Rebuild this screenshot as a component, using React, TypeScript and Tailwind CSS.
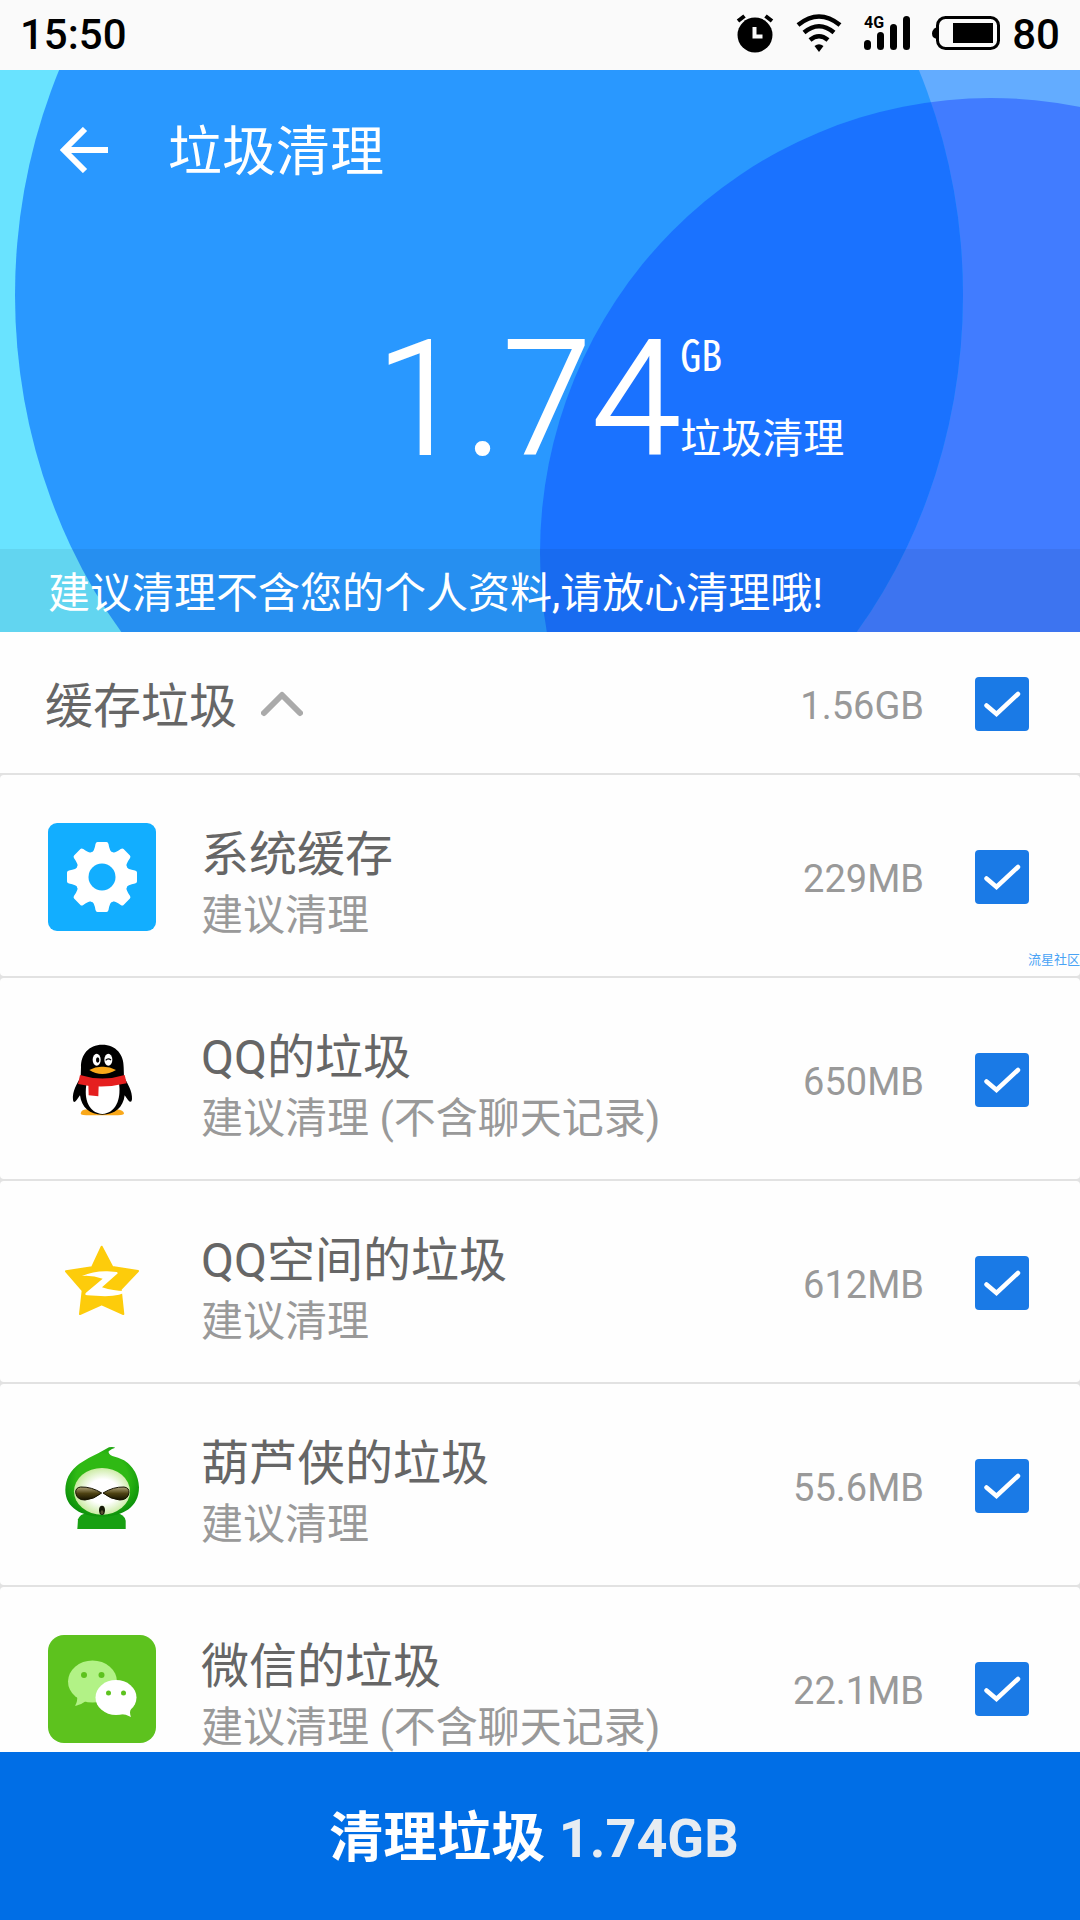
import React, { useState } from "react";

type JunkItem = {
  id: string;
  title: string;
  hint: string;
  size: string;
  icon: React.ReactNode;
};

const SystemIcon = () => (
  <svg viewBox="0 0 108 108" className="size-[108px]" aria-hidden="true">
    <rect width="108" height="108" rx="9" fill="#12aeff" />
    <g fill="#fff">
      <circle cx="54" cy="54" r="27" />
      {[0, 45, 90, 135, 180, 225, 270, 315].map((angle) => (
        <path
          key={angle}
          d="M43 31 Q46.500 28 47.500 21 Q48 19 49.500 19 L58.500 19 Q60 19 60.500 21 Q61.500 28 65 31 Z"
          transform={`rotate(${angle} 54 54)`}
        />
      ))}
    </g>
    <circle cx="54" cy="54" r="13.500" fill="#12aeff" />
  </svg>
);

const QQIcon = () => (
  <svg viewBox="-6 18 324 324" className="size-[108px]" aria-hidden="true">
    <path d="M92 281 Q92 268 116 268 L198 268 Q222 270 222 281 Q220 286 190 286 L122 286 Q92 286 92 281Z" fill="#f9a81a" />
    <path
      d="M157 74 C116 74 92 104 93 142 L92 172 C82 190 66 214 69 240 Q71 252 80 240 L90 226 C94 262 120 284 157 284 C194 284 220 262 224 226 L234 240 Q244 252 246 238 C248 214 232 190 222 172 L221 142 C222 104 198 74 157 74Z"
      fill="#000"
    />
    <path d="M110 190 C100 240 118 280 157 282 C196 280 214 240 207 190Z" fill="#fff" />
    <path d="M90 165 Q157 186 224 165 L230 190 Q157 208 84 192Z" fill="#e51f1f" />
    <path d="M115 190 L146 196 L145 229 L116 226Z" fill="#e51f1f" />
    <ellipse cx="140" cy="119" rx="12" ry="18" fill="#fff" />
    <ellipse cx="175" cy="119" rx="12" ry="18" fill="#fff" />
    <ellipse cx="143" cy="120" rx="5" ry="8" fill="#000" />
    <path d="M167 121 Q174 113 183 120" fill="none" stroke="#000" strokeWidth="4" />
    <path d="M118 150 Q138 139 157 140 Q178 139 198 150 Q178 162 157 162 Q136 162 118 150Z" fill="#f9a81a" />
  </svg>
);

const QzoneIcon = () => (
  <svg viewBox="-6 12 324 324" className="size-[108px]" aria-hidden="true">
    <path
      d="M155 65 L187 126 L264 138 L212 193 L220 267 L155 238 L90 267 L98 197 L48 139 L126 127Z"
      fill="#fdcc0b"
      stroke="#fdcc0b"
      strokeWidth="6"
      strokeLinejoin="round"
    />
    <path
      d="M96 153 Q130 138 172 139 L200 141 Q206 144 200 148 L156 187 Q198 200 231 198 Q216 213 165 214 L112 211 Q102 209 108 203 L158 161 Q126 150 96 153Z"
      fill="#fff"
    />
  </svg>
);

const GourdIcon = () => (
  <svg viewBox="-6 6 324 324" className="size-[108px]" aria-hidden="true">
    <defs>
      <radialGradient id="gourd-hood" cx="50%" cy="45%" r="58%">
        <stop offset="0.600" stopColor="#2fb914" />
        <stop offset="1" stopColor="#0a8f0a" />
      </radialGradient>
      <radialGradient id="gourd-face" cx="52%" cy="50%" r="52%">
        <stop offset="0.500" stopColor="#ffffff" />
        <stop offset="1" stopColor="#c8ea9e" />
      </radialGradient>
      <linearGradient id="gourd-glass" x1="0" y1="0" x2="0" y2="1">
        <stop offset="0" stopColor="#b0a47a" />
        <stop offset="0.500" stopColor="#4d4212" />
        <stop offset="1" stopColor="#161300" />
      </linearGradient>
    </defs>
    <path d="M82 297 L84 268 Q90 252 110 250 L200 250 Q222 252 227 272 L227 297Z" fill="#18a012" />
    <path
      d="M196 53 Q188 49 177 52 L146 69 Q115 83 88 101 Q46 132 46 180 C46 234 96 260 156 260 C218 260 267 232 267 172 Q264 118 222 91 Q204 82 187 78 Q174 72 176 64 Q186 55 196 53Z"
      fill="url(#gourd-hood)"
    />
    <ellipse cx="156" cy="184" rx="84" ry="70" fill="url(#gourd-face)" />
    <g fill="url(#gourd-glass)" stroke="#151200" strokeWidth="3">
      <path d="M155 189 Q125 170 92 171 Q76 173 77 188 Q80 210 105 210 Q132 208 155 189Z" />
      <path d="M159 189 Q190 170 222 171 Q238 173 237 188 Q234 210 209 210 Q182 208 159 189Z" />
    </g>
    <ellipse cx="156" cy="241" rx="9" ry="14" fill="#171a08" />
    <ellipse cx="156" cy="247" rx="4" ry="6" fill="#5a5030" />
  </svg>
);

const WechatIcon = () => (
  <svg viewBox="0 0 108 108" className="size-[108px]" aria-hidden="true">
    <rect width="108" height="108" rx="16" fill="#5dc21e" />
    <path d="M29 60 Q30 66 27 71 Q33 70 38 66Z" fill="#b2f286" />
    <ellipse cx="44.500" cy="46.500" rx="24.500" ry="21" fill="#b2f286" />
    <circle cx="36" cy="40" r="3" fill="#5dc21e" />
    <circle cx="53.500" cy="40" r="3" fill="#5dc21e" />
    <path d="M72 79 Q78 79 83 82 Q81 77 83 74Z" fill="#fff" />
    <ellipse cx="68" cy="62.500" rx="20.500" ry="17.500" fill="#fff" />
    <circle cx="60.500" cy="58" r="2.500" fill="#5dc21e" />
    <circle cx="75.500" cy="58" r="2.500" fill="#5dc21e" />
  </svg>
);

const items: JunkItem[] = [
  { id: "system", title: "系统缓存", hint: "建议清理", size: "229MB", icon: <SystemIcon /> },
  { id: "qq", title: "QQ的垃圾", hint: "建议清理 (不含聊天记录)", size: "650MB", icon: <QQIcon /> },
  { id: "qzone", title: "QQ空间的垃圾", hint: "建议清理", size: "612MB", icon: <QzoneIcon /> },
  { id: "huluxia", title: "葫芦侠的垃圾", hint: "建议清理", size: "55.6MB", icon: <GourdIcon /> },
  { id: "wechat", title: "微信的垃圾", hint: "建议清理 (不含聊天记录)", size: "22.1MB", icon: <WechatIcon /> },
];

const StatusBar = () => (
  <div className="flex h-[70px] shrink-0 items-center justify-between bg-[#fafafa] px-5 text-[42px] font-medium leading-none text-black">
    <span>15:50</span>
    <div className="flex items-center gap-[21px]">
      <svg viewBox="1 2 38 40" className="h-[40px] w-[38px] overflow-visible" aria-hidden="true">
        <circle cx="19" cy="22" r="17.500" fill="#000" />
        <path d="M2 8 L8.500 3 M36 8 L29.500 3" stroke="#000" strokeWidth="4" />
        <path d="M18.500 14 V23.500 H26.500" fill="none" stroke="#fafafa" strokeWidth="4" />
      </svg>
      <svg viewBox="0 2 46 40" className="h-[40px] w-[46px] overflow-visible" aria-hidden="true">
        <g fill="none" stroke="#000" strokeWidth="4.500">
          <path d="M2 12 Q23 -5 44 12" />
          <path d="M8 19.500 Q23 7 38 19.500" />
          <path d="M14 27 Q23 19.500 32 27" />
        </g>
        <path d="M18.500 33 Q23 29.500 27.500 33 L23 39Z" fill="#000" />
      </svg>
      <svg viewBox="0 2 48 40" className="h-[40px] w-[48px] overflow-visible" aria-hidden="true">
        <text x="1" y="15" fontSize="16" fontWeight="700" fill="#000">
          4G
        </text>
        <g stroke="#000" strokeWidth="7" strokeLinecap="round">
          <path d="M4.500 30.500 V33.500" />
          <path d="M17.500 22.500 V33.500" />
          <path d="M30.500 14.500 V33.500" />
          <path d="M43.500 6.500 V33.500" />
        </g>
      </svg>
      <div className="flex items-center gap-3">
        <svg viewBox="0 2 68 40" className="h-[40px] w-[68px]" aria-hidden="true">
          <rect x="5.500" y="4.500" width="61" height="31" rx="8" fill="none" stroke="#000" strokeWidth="3" />
          <path d="M5 14 Q0 16 0 20.500 Q0 25 5 26Z" fill="#000" />
          <rect x="21" y="10" width="40" height="20" fill="#000" />
        </svg>
        <span>80</span>
      </div>
    </div>
  </div>
);

const HeroBackground = () => (
  <svg
    viewBox="0 70 1080 562"
    preserveAspectRatio="none"
    className="absolute inset-0 h-full w-full"
    aria-hidden="true"
  >
    <defs>
      <clipPath id="main-bubble">
        <ellipse cx="489" cy="295" rx="474" ry="534" />
      </clipPath>
    </defs>
    <rect x="0" y="70" width="540" height="562" fill="#69e3ff" />
    <rect x="540" y="70" width="540" height="562" fill="#63acff" />
    <ellipse cx="991" cy="553" rx="451" ry="455" fill="#417cff" />
    <rect x="600" y="553" width="480" height="79" fill="#417cff" />
    <ellipse cx="489" cy="295" rx="474" ry="534" fill="#2998ff" />
    <ellipse cx="991" cy="553" rx="451" ry="455" fill="#1a72ff" clipPath="url(#main-bubble)" />
  </svg>
);

type CheckProps = {
  id: string;
  label: string;
  checked: boolean;
  onChange: () => void;
};

const Check: React.FC<CheckProps> = ({ id, label, checked, onChange }) => (
  <div className="grid size-[54px] shrink-0">
    <input
      id={id}
      type="checkbox"
      aria-label={label}
      checked={checked}
      onChange={onChange}
      className="col-start-1 row-start-1 size-[54px] appearance-none rounded-[4px] border-4 border-[#999999] checked:border-0 checked:bg-[#1a7ae6]"
    />
    {checked && (
      <svg
        viewBox="0 0 54 54"
        className="pointer-events-none col-start-1 row-start-1 size-[54px]"
        aria-hidden="true"
      >
        <path
          d="M11.500 28.500 L21.500 37 L43 17"
          fill="none"
          stroke="#fff"
          strokeWidth="4.500"
          strokeLinecap="round"
        />
      </svg>
    )}
  </div>
);

const App: React.FC = () => {
  const [open, setOpen] = useState(true);
  const [selected, setSelected] = useState<string[]>(items.map((item) => item.id));

  const allSelected = selected.length === items.length;

  const toggle = (id: string) => {
    setSelected((prev) =>
      prev.includes(id) ? prev.filter((value) => value !== id) : [...prev, id]
    );
  };

  return (
    <div className="flex h-screen flex-col overflow-hidden bg-[#fefefe] font-[Roboto,'Noto_Sans_CJK_SC',sans-serif]">
      <StatusBar />

      {/* Header with the total */}
      <header className="relative shrink-0 text-white">
        <HeroBackground />
        <div className="relative">
          <div className="flex h-[160px] items-center gap-[60px] px-[60px]">
            <button type="button" aria-label="返回">
              <svg viewBox="0 0 48 46" className="h-[46px] w-[48px]" aria-hidden="true">
                <path d="M25 2 L4 23 L25 44 M4 23 H48" fill="none" stroke="#fff" strokeWidth="6" />
              </svg>
            </button>
            <h1 className="pt-[6px] text-[54px] leading-[60px]">垃圾清理</h1>
          </div>

          <div className="flex h-[319px] items-start justify-center pl-[140px] pt-[90px]">
            <span className="font-[Roboto,sans-serif] text-[160px] font-light leading-[160px] [-webkit-text-stroke:2px_white]">
              1.74
            </span>
            <div className="flex flex-col gap-8 pt-2 font-['Noto_Sans_Mono_CJK_SC','Noto_Sans_CJK_SC',sans-serif]">
              <span className="text-[42px] leading-[50px]">GB</span>
              <span className="text-[41px] leading-[50px]">垃圾清理</span>
            </div>
          </div>

          <p className="flex h-[83px] items-center bg-black/[0.06] px-12 pt-[6px] text-[42px]">
            建议清理不含您的个人资料,请放心清理哦!
          </p>
        </div>
      </header>

      {/* Junk list */}
      <main className="relative min-h-0 flex-1 overflow-hidden">
        <div className="flex flex-col gap-[2px] bg-[#e2e2e2]">
          <div className="flex h-[141px] items-center bg-[#fefefe] pl-[45px] pr-[51px] pt-[2px]">
            <button
              type="button"
              aria-expanded={open}
              onClick={() => setOpen(!open)}
              className="flex items-center gap-6 text-[48px] leading-[60px] text-[#666666]"
            >
              <span className="pt-[6px]">缓存垃圾</span>
              <svg viewBox="0 0 42 26" className="h-[26px] w-[42px]" aria-hidden="true">
                <path
                  d={open ? "M3 22 L21 4 L39 22" : "M3 4 L21 22 L39 4"}
                  fill="none"
                  stroke="#aaaaaa"
                  strokeWidth="6"
                  strokeLinecap="round"
                  strokeLinejoin="round"
                />
              </svg>
            </button>
            <span className="ml-auto mr-[51px] pt-[6px] text-[38px] text-[#999999]">1.56GB</span>
            <Check
              id="all"
              label="缓存垃圾"
              checked={allSelected}
              onChange={() => setSelected(allSelected ? [] : items.map((item) => item.id))}
            />
          </div>

          {open &&
            items.map((item) => (
              <div
                key={item.id}
                className="flex h-[201px] items-center rounded-[4px] bg-[#fefefe] pl-12 pr-[51px] pt-[2px]"
              >
                {item.icon}
                <div className="ml-[45px] pt-[18px]">
                  <label htmlFor={item.id} className="block text-[48px] leading-[60px] text-[#666666]">
                    {item.title}
                  </label>
                  <p className="text-[42px] leading-[62px] text-[#999999]">{item.hint}</p>
                </div>
                <span className="ml-auto mr-[51px] pt-[6px] text-[38px] text-[#999999]">{item.size}</span>
                <Check
                  id={item.id}
                  label={item.title}
                  checked={selected.includes(item.id)}
                  onChange={() => toggle(item.id)}
                />
              </div>
            ))}
        </div>
        <span className="absolute right-0 top-[320px] text-[13px] leading-4 text-[#4aa3f5]">
          流星社区
        </span>
      </main>

      {/* Clean button */}
      <button
        type="button"
        className="h-[168px] shrink-0 bg-[#006ee6] pr-3 pt-1 text-[54px] font-bold text-white"
      >
        清理垃圾 <span className="text-[#e6ecf2]">1.74GB</span>
      </button>
    </div>
  );
};

export default App;
